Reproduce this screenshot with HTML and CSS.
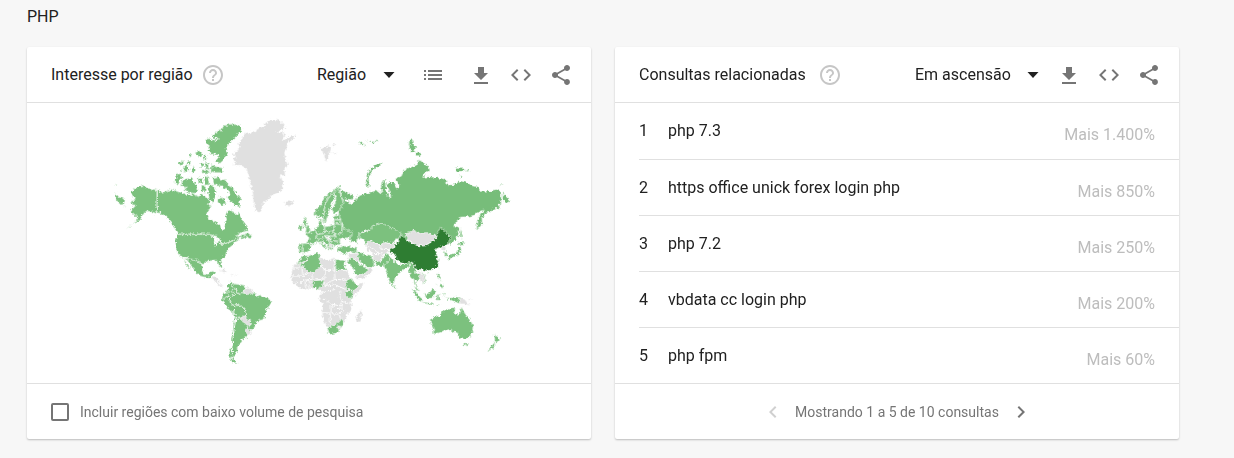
FILE: index.html
```html
<!DOCTYPE html>
<html lang="pt-BR">
<head>
<meta charset="utf-8">
<meta name="viewport" content="width=device-width, initial-scale=1">
<title>PHP</title>
<link rel="stylesheet" href="styles.css">
</head>
<body>
<svg class="defs" aria-hidden="true">
  <symbol id="help" viewBox="0 0 24 24"><path d="M11 18h2v-2h-2v2zm1-16C6.48 2 2 6.48 2 12s4.480 10 10 10 10-4.480 10-10S17.520 2 12 2zm0 18c-4.410 0-8-3.590-8-8s3.590-8 8-8 8 3.590 8 8-3.590 8-8 8zm0-14c-2.210 0-4 1.790-4 4h2c0-1.100.9-2 2-2s2 .9 2 2c0 2-3 1.750-3 5h2c0-2.250 3-2.500 3-5 0-2.210-1.790-4-4-4z"/></symbol>
  <symbol id="caret" viewBox="0 0 24 24"><path d="M6.500 9h11L12 15z"/></symbol>
  <symbol id="list" viewBox="0 0 24 24"><path d="M3 7h2v2H3zm4 0h14v2H7zm-4 4h2v2H3zm4 0h14v2H7zm-4 4h2v2H3zm4 0h14v2H7z"/></symbol>
  <symbol id="download" viewBox="0 0 24 24"><path d="M19 10h-4V4H9v6H5l7 7 7-7zM5 19v2h14v-2H5z"/></symbol>
  <symbol id="code" viewBox="0 0 24 24"><path d="M9.400 16.600 4.800 12l4.600-4.600L8 6l-6 6 6 6 1.400-1.400zm5.200 0 4.600-4.600-4.600-4.600L16 6l6 6-6 6-1.400-1.400z"/></symbol>
  <symbol id="share" viewBox="0 0 24 24"><path d="M18 16.080c-.76 0-1.440.3-1.960.77L8.910 12.700c.05-.23.09-.46.09-.7s-.04-.47-.09-.7l7.050-4.110c.54.5 1.250.81 2.040.81 1.660 0 3-1.340 3-3s-1.340-3-3-3-3 1.340-3 3c0 .24.04.47.09.7L8.040 9.810C7.500 9.310 6.790 9 6 9c-1.660 0-3 1.340-3 3s1.340 3 3 3c.79 0 1.500-.31 2.040-.81l7.120 4.160c-.05.21-.08.43-.08.65 0 1.610 1.310 2.920 2.920 2.920s2.920-1.310 2.920-2.920-1.310-2.920-2.920-2.920z"/></symbol>
  <symbol id="prev" viewBox="0 0 24 24"><path d="M15.410 7.410 14 6l-6 6 6 6 1.410-1.410L10.830 12z"/></symbol>
  <symbol id="next" viewBox="0 0 24 24"><path d="M10 6 8.590 7.410 13.170 12l-4.580 4.590L10 18l6-6z"/></symbol>
</svg>
<main class="page">
  <h1 class="term">PHP</h1>
  <div class="cards">
    <section class="card">
      <header class="card-header">
        <h2 class="title">Interesse por região</h2>
        <button class="help" aria-label="Ajuda"><svg class="icon"><use href="#help"/></svg></button>
        <div class="tools">
          <div class="picker picker-spaced">
            <select class="select" aria-label="Resolução"><option>Região</option></select>
            <svg class="caret"><use href="#caret"/></svg>
          </div>
          <button class="tool tool-list" aria-label="Lista"><svg class="icon"><use href="#list"/></svg></button>
          <button class="tool" aria-label="Download"><svg class="icon"><use href="#download"/></svg></button>
          <button class="tool" aria-label="Incorporar"><svg class="icon"><use href="#code"/></svg></button>
          <button class="tool" aria-label="Compartilhar"><svg class="icon"><use href="#share"/></svg></button>
        </div>
      </header>
      <div class="map-area">
        <svg class="map" viewBox="81 309 1692 840" role="img" aria-label="Mapa do interesse por região">
          <defs>
            <filter id="coast" x="-5%" y="-5%" width="110%" height="110%">
              <feTurbulence type="fractalNoise" baseFrequency="0.13" numOctaves="3" seed="4"/>
              <feDisplacementMap in="SourceGraphic" scale="14" xChannelSelector="R" yChannelSelector="G"/>
            </filter>
          </defs>
          <g filter="url(#coast)">
          <!-- Canada and Alaska -->
          <g class="land" transform="translate(330 330)">
            <path d="M62 246L76 234 92 226 108 232 124 236 141 240V312L132 308 118 304 108 304 100 312 94 324 84 334 66 344 80 330 86 318 76 318 66 310 60 300 70 294 76 286 66 284 60 276 72 270 76 262 66 256Z"/>
            <path d="M17 248L28 262 38 264 46 272 42 280 32 282 24 274 18 276ZM38 284l12 7-6 0ZM16 222l6 2-4 4ZM50 354l16-9-8 8Z"/>
            <path d="M142 240L154 246 166 244 184 238 204 244 220 248 238 256 250 252 262 258 276 252 288 262 300 270 296 284 306 288 296 300 290 312 294 322 306 330 322 338 332 346 334 360 342 362 344 346 350 330 346 316 350 304 360 300 372 306 380 314 386 308 394 324 404 340 412 352 416 362 400 366 386 372 376 378 390 378 402 372 414 374 418 382 400 386 386 382 366 392 350 400 336 402 330 388 322 380 306 376 290 373H203L192 352 180 334 168 320 156 312 142 308Z"/>
            <path d="M306 76L318 66 334 60 340 48 360 42 386 44 398 60 384 74 370 88 358 100 348 116 352 130 342 150 330 160 314 156 326 140 318 130 304 134 294 122 300 112 288 102 290 86 302 86 312 92 326 84 310 84Z"/>
            <path d="M254 128L268 122 278 134 268 142ZM234 136l8-4 4 6-8 4ZM280 134l10 2-2 14-6-2ZM204 162L220 150 222 158 210 168ZM218 172L230 166 240 182 224 188ZM232 158l8-6 4 12-8 2ZM246 172l8-2v16l-10 4ZM270 160h12v10h-12ZM282 152l14 8v20l-10-8ZM304 162L318 170 338 174 338 188 316 188 302 184ZM274 180l16-2 12 10-24 2ZM210 178l8 2-2 6-6-2Z"/>
            <path d="M196 190L212 192 218 204 208 214 202 224 194 218ZM214 216L228 206 246 204 254 218 260 234 266 240 254 250 236 248 222 240 232 230 214 228ZM262 204l14-2 2 16-12 2ZM282 196l12 4 4 24-14 2ZM274 226l14 4-2 18-12-6ZM308 202L326 198 332 210 348 208 356 226 368 234 378 248 388 260 396 268 386 276 392 292 378 288 362 276 352 262 360 252 350 238 334 228 320 228 310 218ZM298 220l14 8 6 24-8 26-12-6-4-28ZM324 260L342 268 350 282 336 286 322 276Z"/>
          </g>
          <!-- USA to South America -->
          <g class="land" transform="translate(495 675)">
            <path d="M34 34L38 28H130L142 32 148 44 148 58 154 60 156 46 164 54 176 58 192 52 206 46 216 36 224 36 220 46 208 54 202 62 190 70 184 82 182 92 172 100 166 108 170 122 164 128 158 112 150 106 134 108 122 110 114 120 106 112 96 106 82 104 66 100 54 98 44 92 36 82 32 66 31 50Z"/>
            <path d="M62 100L82 104 96 107 106 112 114 122 112 136 118 148 130 150 138 138 152 140 144 152 136 160 124 158 108 154 92 144 84 130 74 116ZM54 98L62 110 72 124 80 138 68 126 60 114ZM236 26l14-2 12 10-10 6-12-4Z"/>
            <path class="quiet" d="M138 154L150 154 162 162 160 172 168 180 178 180 168 187 156 176 146 166ZM160 138L176 132 190 142 180 142ZM194 146l14 2-6 5ZM212 149h8v3h-8Z"/>
            <path d="M186 180L196 170 206 176 222 178 236 180 240 188 248 196 262 196 268 208 280 212 296 214 312 222 320 232 312 246 304 256 302 272 294 284 280 288 272 298 270 306 258 318 258 326 248 328 246 338 230 344 232 350 222 358 222 366 214 374 216 384 206 394 208 404 218 416 206 416 196 404 192 384 198 366 198 340 204 310 206 280 204 264 190 254 182 240 170 226 172 210 182 200 188 190Z"/>
            <path class="quiet" d="M240 188L248 186 268 198 260 206 246 208 236 200ZM230 276L242 270 246 282 258 288 254 302 244 296 230 288ZM242 312L256 314 262 324 250 330 242 322Z"/>
            <path class="border" d="M206 262L210 242 200 238 192 226 200 214 210 208 206 200 182 200M174 222L188 216 192 208M200 176L202 190 214 192 218 204 210 208M218 204L226 208 238 200M210 242L226 240 242 256 244 272M206 264L212 284 206 320 202 360 202 404M212 282L230 278M256 302L244 314"/>
          </g>
          <!-- North Atlantic -->
          <g class="land quiet" transform="translate(660 330)">
            <path d="M36 132L50 124 58 108 54 98 66 86 78 66 90 72 98 62 106 66 116 50 132 52 136 38 156 28 176 30 190 42 196 52 186 62 170 66 192 66 196 78 188 92 204 82 216 74 228 78 218 90 204 98 200 116 194 128 198 150 204 166 194 180 196 196 182 198 192 220 188 240 172 250 156 256 146 268 132 276 126 296 118 308 108 304 100 280 98 250 90 220 86 196 78 176 62 166 40 166 48 156 36 150 48 142Z"/>
            <path d="M192 276L206 270 220 274 216 284 204 290 196 284ZM302 114L316 112 328 104 334 116 328 134 320 158 312 138ZM334 102l12 0-4 12ZM340 126l10 2-6 6Z"/>
          </g>
          <!-- Russia -->
          <g class="land russia" transform="translate(1080 390)">
            <path d="M-59 184L-46 182-28 192-20 202-26 210-44 206-48 212-34 214-30 222-16 214-4 196 8 194 20 188 40 184 52 180 66 192 62 168 68 150 76 150 78 180 84 196 92 204 90 184 82 172 86 156 104 158 114 178 116 162 106 146 124 138 130 122 148 112 168 106 178 90 188 96 206 108 210 122 196 128 188 142 210 140 240 144 256 148 264 164 282 164 300 152 324 158 334 166 354 170 362 184 392 182 408 178 424 184V220L416 226 422 234 404 236 392 246 376 250 366 266 368 280 358 294 350 300 350 276 358 258 372 240 354 246 344 256 326 260 302 262 290 274 282 288 296 290 298 304 292 322 280 336 270 345 230 330 120 330 60 290 6 306 0 342-26 334-40 318-66 262-62 232-52 214Z"/>
            <path d="M428 186L438 196 447 206 447 220 436 216 428 206ZM16 164L20 136 34 114 50 102 68 97 64 106 46 114 32 130 26 146 30 170 20 170ZM148 28L158 28 158 42 168 50 164 68 152 62 146 44ZM168 64L184 70 180 80 168 76ZM286 112L310 112 314 122 290 126ZM316 118l14 4-10 4ZM298 136l10 2-4 6ZM422 162l10 2-8 4ZM-2 40l12-4 2 6-12 3ZM18 36l12-6 2 6ZM34 34l12 0-6 8ZM44 28l10 2-4 5ZM12 48l10-2-4 6Z"/>
          </g>
          <!-- Europe -->
          <g class="land" transform="translate(855 510)">
            <path d="M90 122L104 110 116 86 130 70 146 58 164 50 170 58 158 66 148 74 146 92 138 102 134 120 128 138 122 158 114 158 110 140 98 142 88 134Z"/>
            <path d="M148 70L162 58 168 76 174 96 168 116 156 128 144 130 140 116 150 100 152 84Z"/>
            <path d="M56 142L64 146 66 164 78 182 60 190 64 174 54 160ZM42 166l10-3v16l-11 3Z"/>
            <path d="M60 190L80 186 90 176 100 168 102 150 110 150 112 166 124 170 140 166 148 162 146 138 162 134 166 148 170 160 180 178 202 186 200 202 184 204 172 204 164 212 168 222 150 226 142 230 146 242 134 238 124 222 112 214 114 222 130 234 128 242 112 230 104 216 98 212 88 220 80 222 66 218 72 204Z"/>
            <path d="M42 220L66 220 80 226 68 246 52 250 42 246ZM158 232L178 228 198 230 216 232 216 248 196 246 178 252 160 246Z"/>
            <path class="quiet" d="M120 196l12 2 4 12-10 0ZM132 222l10 2-2 10-8-4Z"/>
            <path class="border" d="M118 156L116 124 124 92 148 62M90 178L96 192 92 204 104 210M118 170L120 186 108 192 96 192M120 186L146 184 148 164M146 184L150 196 170 188 172 164 148 160M104 206L122 200 148 198 168 208M134 198L136 224M136 212L160 214M52 222V246M146 148L166 150"/>
          </g>
          <!-- Africa and the Middle East -->
          <g class="land" transform="translate(855 720)">
            <path class="quiet" d="M48 48L62 46 82 42 104 38 106 50 118 58 134 62 142 52 152 58 178 62 184 64 178 74 188 92 194 110 200 120 216 134 236 126 232 142 216 158 204 172 196 184 202 198 198 214 184 224 184 240 174 248 172 262 154 278 132 282 126 262 114 236 110 214 112 192 102 176 108 160 104 148 92 144 80 146 64 148 46 146 30 134 18 118 18 104 22 84 34 68 48 60Z"/>
            <path class="border" d="M22 84H40L50 74M50 80L54 108 20 108M54 108L74 98M84 98L82 118 60 120 44 128 30 126M60 120L62 148M74 122V146M106 78L122 90 118 116 84 122M104 78L120 90 148 92M148 92L150 118 138 124 120 138 116 122M152 90H186M148 60V92M150 118L180 120 188 122M120 140L148 134 182 148M108 160L122 152 138 152 150 148M108 178L126 178 134 190 146 194 148 204M112 218L146 220M138 194V218M146 194L168 198 170 184 164 170 168 152M170 184L196 192M150 206L172 204M136 222V252M146 222L160 222 170 236M160 220L180 210"/>
            <path d="M48 50L62 46 68 58 50 68 36 74ZM66 50L84 42 102 38 104 54 106 78 84 98 74 96 46 74 66 62ZM152 58L182 62 178 72 186 90H152ZM84 122L118 120 112 136 100 150 84 142ZM186 120L200 114 212 132 224 138 206 152 188 148 180 140ZM182 152L204 152 202 168 196 180 184 170ZM126 260L142 258 158 250 170 238 176 250 168 264 154 280 132 284Z"/>
            <path class="quiet" d="M230 206L232 220 224 246 212 246 214 228ZM158 258h8v8h-8ZM210 106L244 98 250 82 264 90 246 110 216 120ZM190 42L214 38 222 56 226 68 208 58 188 56Z"/>
            <path d="M186 60L200 54 222 70 236 80 248 86 244 98 222 106 212 106 204 86ZM216 34L238 42 258 46 268 60 266 84 248 82 228 68 218 50Z"/>
          </g>
          <!-- Asia and Oceania -->
          <g class="land" transform="translate(1080 660)">
            <path d="M-4 40L14 36 32 28 36 18 66 10 96 24 124 40 118 54 104 62 102 72 72 68 60 76 34 62 22 74 8 66-2 58Z"/>
            <path class="quiet" d="M20 68L34 62 60 76 72 68 106 72 98 84 84 88 84 100 68 104 66 122 48 126 36 118 40 100 24 92 18 80Z"/>
            <path class="border" d="M26 78L60 100M60 76L66 88 84 88M40 100L66 102"/>
            <path class="sea" d="M-10 62L2 54 14 64 6 72 14 90 12 96 0 92-4 78Z"/>
            <path d="M44 126L66 122 72 108 84 100 92 112 82 124 76 134 72 142 58 138 46 138Z"/>
            <path d="M72 138L82 124 92 112 98 120 112 132 128 134 142 128 158 126 150 136 134 148 120 158 106 172 102 190 96 199 88 184 80 164 76 150ZM100 194l7 4v8l-7-2Z"/>
            <path class="top" d="M86 88L104 82 106 70 116 66 116 54 126 46 138 58 150 68 172 76 192 78 208 70 218 62 230 54 232 40 240 22 254 32 262 46 276 50 268 60 266 72 248 78 238 84 222 88 230 96 230 110 236 126 232 140 216 150 200 154 184 148 172 152 164 140 156 126 140 130 124 126 108 120 102 102 92 100Z"/>
            <path class="quiet" d="M134 42L152 38 160 30 178 40 200 38 218 46 230 46 226 58 208 68 196 77 172 77 150 66 142 54Z"/>
            <path d="M148 136L158 132 164 144 168 158 178 164 186 174 178 180 166 182 170 200 180 214 172 212 164 196 160 176 150 170 146 150Z"/>
            <path class="quiet" d="M172 154L182 156 192 168 198 180 190 192 180 182 178 168ZM242 82L256 76 258 88 248 93Z"/>
            <path d="M182 150L190 158 198 174 196 186 184 196 192 184 194 174ZM200 154l6 4-5 3ZM232 138l5 0-2 10ZM232 160l8 4v16l-7-5ZM240 178l8 6-6 0ZM240 190l10 4-2 12-8-6ZM228 192l4-6-2 10ZM152 204L166 212 180 230 190 244 182 246 168 230ZM184 246L200 247 222 252 220 256 200 253ZM226 252l16 1-14 4ZM194 222L210 216 220 204 228 214 218 234 204 236 196 230ZM230 226L244 220 236 228 240 240 230 242ZM250 218l6 2-4 12ZM256 230L270 234 284 230 299 232 299 252 286 246 270 240ZM252 94h9l2 15h-9ZM262 112L276 102 288 98 294 84 302 78 304 94 294 106 278 112 266 120ZM296 66L314 66 306 78 298 76ZM301 20L307 42 305 58 300 50Z"/>
            <path class="quiet" d="M299 232L314 238 330 258 312 252 299 252ZM324 236l12 2-8 4Z"/>
            <path d="M210 298L226 290 242 284 250 272 262 266 268 268 280 262 286 266 282 278 296 286 302 272 304 258 310 272 318 284 330 300 340 316 338 332 328 354 308 358 294 350 288 336 280 338 270 328 252 332 240 338 220 343 220 328 212 312ZM310 368l14 1-6 11-6-4ZM402 342L420 356 410 368 404 362ZM404 366L406 376 392 392 382 392 392 380Z"/>
          </g>
          </g>
        </svg>
      </div>
      <footer class="card-footer">
        <label class="low-volume"><input class="check" type="checkbox">Incluir regiões com baixo volume de pesquisa</label>
      </footer>
    </section>

    <section class="card">
      <header class="card-header">
        <h2 class="title">Consultas relacionadas</h2>
        <button class="help help-spaced" aria-label="Ajuda"><svg class="icon"><use href="#help"/></svg></button>
        <div class="tools">
          <div class="picker">
            <select class="select" aria-label="Ordenação"><option>Em ascensão</option></select>
            <svg class="caret"><use href="#caret"/></svg>
          </div>
          <button class="tool" aria-label="Download"><svg class="icon"><use href="#download"/></svg></button>
          <button class="tool" aria-label="Incorporar"><svg class="icon"><use href="#code"/></svg></button>
          <button class="tool" aria-label="Compartilhar"><svg class="icon"><use href="#share"/></svg></button>
        </div>
      </header>
      <div class="queries-area">
        <table class="queries">
          <tr><td class="rank">1</td><td class="query">php 7.3</td><td class="growth">Mais 1.400%</td></tr>
          <tr><td class="rank">2</td><td class="query">https office unick forex login php</td><td class="growth">Mais 850%</td></tr>
          <tr><td class="rank">3</td><td class="query">php 7.2</td><td class="growth">Mais 250%</td></tr>
          <tr><td class="rank">4</td><td class="query">vbdata cc login php</td><td class="growth">Mais 200%</td></tr>
          <tr><td class="rank">5</td><td class="query">php fpm</td><td class="growth">Mais 60%</td></tr>
        </table>
      </div>
      <footer class="card-footer pager">
        <button class="page-button" aria-label="Anterior" disabled><svg class="icon"><use href="#prev"/></svg></button>
        <span class="range">Mostrando 1 a 5 de 10 consultas</span>
        <button class="page-button" aria-label="Próxima"><svg class="icon"><use href="#next"/></svg></button>
      </footer>
    </section>
  </div>
</main>
</body>
</html>
```

FILE: styles.css
```css
* { box-sizing: border-box; }

body {
  margin: 0;
  background: #f7f7f7;
  color: #212121;
  font: 16px/24px Roboto, sans-serif;
}

button {
  display: grid;
  place-items: center;
  padding: 0;
  border: 0;
  background: none;
  color: #757575;
}

.defs { display: none; }
.icon, .caret { display: block; width: 24px; height: 24px; fill: currentColor; }

.page { padding: 5px 55px 16px 27px; }
.term { margin: 0 0 18px; font-size: 16px; font-weight: 400; }

.cards { display: grid; grid-template-columns: 1fr 1fr; gap: 24px; }

.card {
  display: flex;
  flex-direction: column;
  min-width: 0;
  background: #fff;
  border-radius: 2px;
  box-shadow: 0 1px 2px rgba(0, 0, 0, .24);
}

.card-header {
  display: flex;
  align-items: center;
  min-height: 56px;
  padding: 0 10px 0 24px;
  border-bottom: 1px solid #e0e0e0;
}

.title { margin: 0; font-size: 16px; font-weight: 400; }
.help { margin-left: 8px; color: #c6c6c6; }
.help-spaced { margin-left: 12px; }

.tools { display: flex; align-items: center; margin-left: auto; }
.tool { width: 40px; height: 40px; }
.tool-list { margin-right: 8px; }

.picker { display: grid; align-items: center; margin-right: 4px; }
.picker-spaced { margin-right: 12px; }
.select, .caret { grid-area: 1 / 1; }
.select {
  appearance: none;
  margin: 0;
  padding: 0 34px 0 0;
  border: 0;
  background: none;
  color: inherit;
  font: inherit;
}
.caret { justify-self: end; pointer-events: none; }

.map-area { flex: 1; }
.map { display: block; width: 100%; }
.land { fill: #7bc17e; stroke: #fff; stroke-width: 2; stroke-linejoin: round; }
.russia { fill: #77bd7a; }
.quiet { fill: #e0e0e0; }
.top { fill: #2e7d32; }
.sea { fill: #fff; }
.border { fill: none; stroke-width: 3; }

.card-footer {
  display: flex;
  align-items: center;
  min-height: 56px;
  padding: 0 24px;
  border-top: 1px solid #e0e0e0;
  color: #757575;
  font-size: 14px;
}

.low-volume { display: flex; align-items: center; gap: 11px; }
.check {
  appearance: none;
  width: 18px;
  height: 18px;
  margin: 0;
  border: 2px solid #757575;
  border-radius: 2px;
}

.queries-area { flex: 1; padding-left: 24px; }
.queries { width: 100%; border-collapse: separate; border-spacing: 0; }
.queries td { height: 56px; padding: 0; }
.queries tr + tr td { border-top: 1px solid #e0e0e0; }
.queries .rank { width: 29px; }
.queries .growth { padding: 8px 24px 0 0; color: #bdbdbd; text-align: right; }

.pager { justify-content: center; gap: 10px; }
.page-button:disabled { color: #d0d0d0; }
```
